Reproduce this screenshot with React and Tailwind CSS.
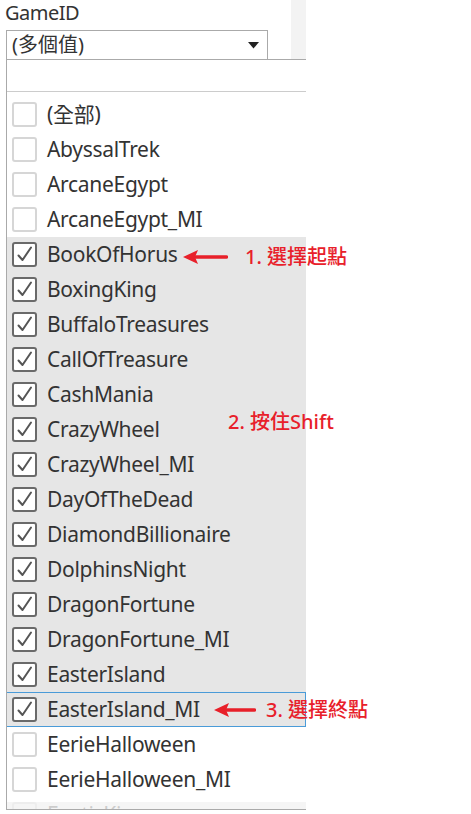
import React from 'react';

const games = [
  { name: '(全部)', checked: false },
  { name: 'AbyssalTrek', checked: false },
  { name: 'ArcaneEgypt', checked: false },
  { name: 'ArcaneEgypt_MI', checked: false },
  { name: 'BookOfHorus', checked: true },
  { name: 'BoxingKing', checked: true },
  { name: 'BuffaloTreasures', checked: true },
  { name: 'CallOfTreasure', checked: true },
  { name: 'CashMania', checked: true },
  { name: 'CrazyWheel', checked: true },
  { name: 'CrazyWheel_MI', checked: true },
  { name: 'DayOfTheDead', checked: true },
  { name: 'DiamondBillionaire', checked: true },
  { name: 'DolphinsNight', checked: true },
  { name: 'DragonFortune', checked: true },
  { name: 'DragonFortune_MI', checked: true },
  { name: 'EasterIsland', checked: true },
  { name: 'EasterIsland_MI', checked: true, focused: true },
  { name: 'EerieHalloween', checked: false },
  { name: 'EerieHalloween_MI', checked: false },
  { name: 'ExoticKing', checked: false },
];

const Checkbox = ({ checked }) => (
  <div
    className={
      checked
        ? 'w-[25px] h-[25px] rounded-[3px] border-2 border-[#6a6a6a] bg-white flex-shrink-0 relative'
        : 'w-[25px] h-[25px] rounded-[3px] border-2 border-[#d6d6d6] bg-white flex-shrink-0'
    }
  >
    {checked && (
      <svg className="absolute -left-[2px] -top-[2px]" width="25" height="25" viewBox="0 0 25 25">
        <polyline points="6.5,13.5 10.5,18 19,5.5" fill="none" stroke="#555" strokeWidth="2" strokeLinecap="round" strokeLinejoin="round" />
      </svg>
    )}
  </div>
);

// red arrow pointing left
const Arrow = ({ width }) => (
  <svg width={width} height="16" viewBox={`0 0 ${width} 16`}>
    <polygon points="0,8 15,1 12,8 15,15" fill="#e8202a" />
    <line x1="11" y1="8" x2={width - 1.5} y2="8" stroke="#e8202a" strokeWidth="3.5" strokeLinecap="round" />
  </svg>
);

const Note = ({ children }) => (
  <span className="text-[20px] leading-none text-[#e8202a] font-medium whitespace-nowrap">{children}</span>
);

export default function App() {
  return (
    <div
      className="relative w-[471px] h-[814px] overflow-hidden bg-white text-[#333]"
      style={{ fontFamily: '"Noto Sans", "Noto Sans CJK TC", sans-serif' }}
    >
      <div className="w-[306px] h-full flex flex-col">
        {/* --- header --- */}
        <div className="h-[59px] flex flex-shrink-0">
          <div className="w-[291px]">
            <div className="pl-[5px] text-[20px] leading-[26px] tracking-[-0.5px] text-[#333]">GameID</div>
            <div className="ml-[6px] mt-[4px] w-[262px] h-[29px] border-t border-l border-r border-[#aaa] flex items-center justify-between pl-[5px] pr-[8px]">
              <span className="text-[20px] leading-none text-[#333]">(多個值)</span>
              <svg width="11" height="7" viewBox="0 0 11 7">
                <polygon points="0,0 11,0 5.5,6.5" fill="#222" />
              </svg>
            </div>
          </div>
          <div className="w-[15px] bg-[#f3f3f3]" />
        </div>

        {/* --- list panel --- */}
        <div className="ml-[6px] w-[300px] h-[751px] border-l border-t border-b border-[#aaa] flex flex-col overflow-hidden relative">
          <div className="h-[32px] border-b border-[#ccc] flex-shrink-0" />
          <div className="pt-[5px]">
            {games.map((g) => (
              <div
                key={g.name}
                className={
                  g.checked
                    ? 'relative h-[35px] flex items-center pl-[5px] gap-[10px] bg-[#e6e6e6]'
                    : 'relative h-[35px] flex items-center pl-[5px] gap-[10px]'
                }
              >
                <Checkbox checked={g.checked} />
                <span className="text-[21px] leading-none tracking-[-0.3px] text-[#333] whitespace-nowrap">{g.name}</span>
                {g.focused && (
                  <div className="absolute -left-px top-0 bottom-0 right-0 border border-[#4a9bd8]" />
                )}
              </div>
            ))}
          </div>
          <div className="absolute left-0 right-0 bottom-0 h-[7px] bg-[#f3f3f3]/80" />
        </div>
      </div>

      {/* --- annotations --- */}
      <div className="absolute left-[183px] top-[247px] flex items-center gap-[17px]">
        <Arrow width={45} />
        <Note>1. 選擇起點</Note>
      </div>
      <div className="absolute left-[228px] top-[411px]">
        <Note>2. 按住Shift</Note>
      </div>
      <div className="absolute left-[214px] top-[700px] flex items-center gap-[10px]">
        <Arrow width={42} />
        <Note>3. 選擇終點</Note>
      </div>
    </div>
  );
}
